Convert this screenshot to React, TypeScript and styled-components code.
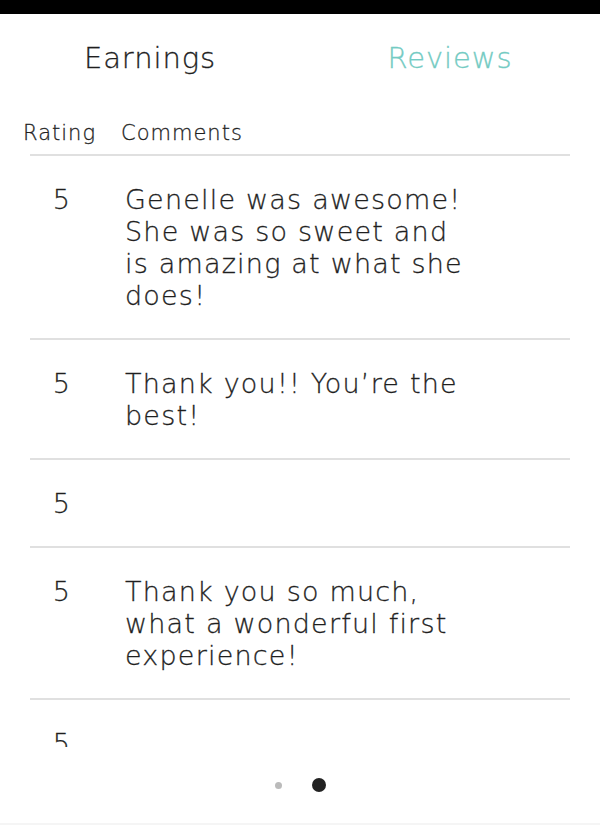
import React from "react";
import styled, { createGlobalStyle } from "styled-components";

const GlobalStyle = createGlobalStyle`
    html, body {
        margin: 0;
        padding: 0;
        background: #fff;
    }
    body {
        font-family: "DejaVu Sans", "Open Sans", sans-serif;
        font-weight: 200;
        color: #1f1f1f;
        -webkit-text-stroke: 0.3px currentColor;
    }
`;

interface Review {
    id: number;
    rating: number;
    comment?: string;
}

const reviews: Review[] = [
    { id: 1, rating: 5, comment: "Genelle was awesome! She was so sweet and is amazing at what she does!" },
    { id: 2, rating: 5, comment: "Thank you!! You’re the best!" },
    { id: 3, rating: 5 },
    { id: 4, rating: 5, comment: "Thank you so much, what a wonderful first experience!" },
    { id: 5, rating: 5 },
];

const Screen = styled.div`
    width: 600px;
    height: 825px;
    display: flex;
    flex-direction: column;
    overflow: hidden;
`;

const StatusBar = styled.div`
    height: 14px;
    background: #000;
`;

const Tabs = styled.div`
    height: 88px;
    display: flex;
`;

const Tab = styled.div<{ active?: boolean }>`
    flex: 1;
    display: flex;
    justify-content: center;
    align-items: center;
    font-size: 29px;
    letter-spacing: 0.9px;
    color: ${p => p.active ? '#74cbc3' : '#1f1f1f'};
    user-select: none;
    cursor: pointer;
`;

const Header = styled.div`
    display: flex;
    padding: 18px 0 8px 23px;
    height: 26px;
    line-height: 26px;
    font-size: 21px;
    letter-spacing: 1px;
`;

const HeaderCell = styled.div<{ width?: number }>`
    width: ${p => p.width ? `${p.width}px` : 'auto'};
`;

const ListViewport = styled.div`
    height: 591px;
    margin: 0 30px;
    overflow: hidden;
    border-top: 2px solid #e0e0e0;
`;

const Row = styled.div`
    display: grid;
    grid-template-columns: 64px 350px;
    column-gap: 31px;
    padding: 28px 0 26px;
    border-bottom: 2px solid #e0e0e0;
    font-size: 27px;
    line-height: 32px;
    letter-spacing: 1.2px;
`;

const Rating = styled.div`
    text-align: center;
`;

const Comment = styled.div``;

const Pager = styled.div`
    flex: 1;
    display: flex;
    justify-content: center;
    align-items: center;
    gap: 30px;
    border-bottom: 2px solid #f5f5f5;
`;

const Dot = styled.span<{ active?: boolean }>`
    display: block;
    width: ${p => p.active ? 14 : 7}px;
    height: ${p => p.active ? 14 : 7}px;
    border-radius: 50%;
    background: ${p => p.active ? '#222' : '#bbb'};
`;

const App: React.FC = () => {
    return <>
        <GlobalStyle />
        <Screen>
            <StatusBar />
            <Tabs>
                <Tab>Earnings</Tab>
                <Tab active>Reviews</Tab>
            </Tabs>
            <Header>
                <HeaderCell width={98}>Rating</HeaderCell>
                <HeaderCell>Comments</HeaderCell>
            </Header>
            <ListViewport>
                {reviews.map(it => <Row key={it.id}>
                    <Rating>{it.rating}</Rating>
                    <Comment>{it.comment}</Comment>
                </Row>)}
            </ListViewport>
            <Pager>
                <Dot />
                <Dot active />
            </Pager>
        </Screen>
    </>
}

export default App;
